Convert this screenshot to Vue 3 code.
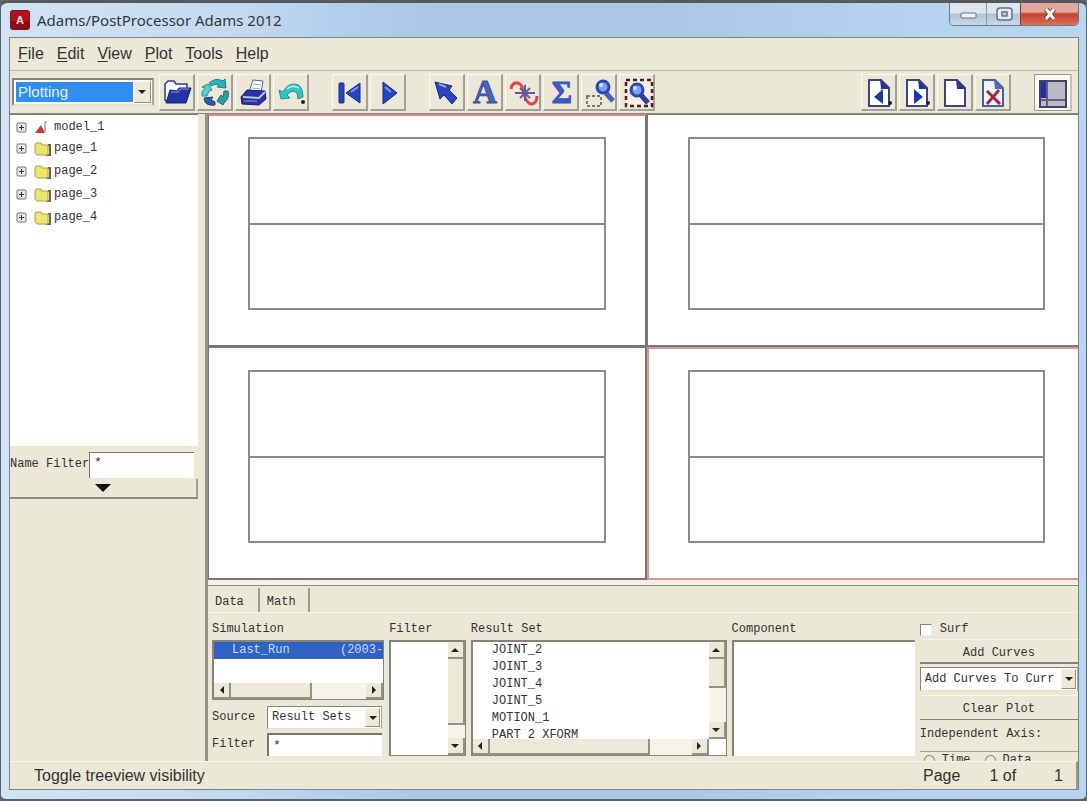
<script setup>
import { ref } from 'vue'

const menus = ['File', 'Edit', 'View', 'Plot', 'Tools', 'Help']
const pages = ['page_1', 'page_2', 'page_3', 'page_4']
const results = ['JOINT_2', 'JOINT_3', 'JOINT_4', 'JOINT_5', 'MOTION_1', 'PART 2 XFORM']
const plots = [1, 2, 3, 4]
const activePlot = ref(4)
const nameFilter = ref('*')
const filter = ref('*')
const surf = ref(false)
</script>

<template>
  <div class="window">
    <header class="titlebar">
      <svg class="logo" viewBox="0 0 20 20" aria-hidden="true">
        <rect x="0.5" y="0.5" width="19" height="19" rx="2" fill="#b3121c" stroke="#7c1319" />
        <rect x="1" y="11" width="18" height="8" fill="#8e0d15" />
        <text x="10" y="14" text-anchor="middle" font-family="Liberation Sans, sans-serif" font-size="11" font-weight="bold" fill="#f5dcdc">A</text>
      </svg>
      <h1>Adams/PostProcessor Adams 2012</h1>
      <div class="controls">
        <button class="min" aria-label="Minimize">
          <svg viewBox="0 0 20 16"><rect x="3" y="7" width="15" height="5" rx="1" fill="#eef3f8" stroke="#66727f" /></svg>
        </button>
        <button class="max" aria-label="Maximize">
          <svg viewBox="0 0 20 16"><rect x="3" y="2" width="15" height="12" rx="3" fill="#e4ebf2" stroke="#66727f" stroke-width="1.5" /><rect x="8" y="6" width="5" height="4" fill="#c5ced8" stroke="#66727f" stroke-width="1.5" /></svg>
        </button>
        <button class="close" aria-label="Close">
          <svg viewBox="0 0 20 16"><path d="M6 3 L14 13 M14 3 L6 13" stroke="#7b3a35" stroke-width="5" /><path d="M6 3 L14 13 M14 3 L6 13" stroke="#fff" stroke-width="3" /></svg>
        </button>
      </div>
    </header>

    <div class="client">
      <nav class="menubar">
        <a v-for="m in menus" :key="m" href="#"><u>{{ m[0] }}</u>{{ m.slice(1) }}</a>
      </nav>

      <div class="toolbar">
        <div class="combo mode">
          <select aria-label="Mode"><option>Plotting</option></select>
          <span class="drop"></span>
        </div>
        <div class="group">
          <button class="tool" aria-label="Open">
            <svg viewBox="0 0 36 36"><path d="M6 10 L9 7 L15 7 L17 10 L28 10 L28 17 L12 18 L9 28 L6 26 Z" fill="#f2f4fb" stroke="#333a72" stroke-width="1.5" /><path d="M7 29 L11 16 L18 17 L20 14 L32 14 L27 29 Z" fill="#2433a9" stroke="#16206f" /><path d="M12 18 L19 18 L21 15 L30 15" fill="none" stroke="#7f92e4" /></svg>
          </button>
          <button class="tool" aria-label="Reload">
            <svg viewBox="0 0 36 36"><path d="M12 9 Q19 3 26 7 L28 5 L29 14 L20 13 L22 11 Q18 9 14 12 Z" fill="#27b6ba" stroke="#257a8a" /><path d="M11 10 L15 16 L12 17 L10 22 L5 22 Q4 17 8 14 L5 13 Z" fill="#5acfcf" stroke="#2f8f98" /><path d="M7 24 L16 23 L14 26 L18 28 L18 31 Q11 32 8 28 Z" fill="#285e9e" stroke="#1c4778" /><path d="M27 17 L31 17 Q33 24 27 29 L26 31 L20 27 L24 21 L26 23 Z" fill="#2a9dab" stroke="#24667c" /></svg>
          </button>
          <button class="tool" aria-label="Print">
            <svg viewBox="0 0 36 36"><path d="M14 18 L18 6 L28 7 L26 19 Z" fill="#fff" stroke="#59627a" /><path d="M18 10 L26 11 M17 14 L25 15" stroke="#9aa5be" /><path d="M6 23 L12 16 L30 17 L31 25 L24 31 L7 30 Z" fill="#2733a2" stroke="#171f68" /><path d="M8 23 L24 24 L30 18" fill="none" stroke="#b9c4f3" stroke-width="2" /><path d="M9 27 H22" stroke="#8d9ce3" /></svg>
          </button>
          <button class="tool" aria-label="Undo">
            <svg viewBox="0 0 36 36"><path d="M6 16 L8 25 L17 24 L14 21 Q19 15 24 19 L25 25 L30 23 Q30 10 21 10 Q14 10 10 18 Z" fill="#38bfc4" stroke="#25939d" /><path d="M14 15 Q19 10 26 14" fill="none" stroke="#a1e8e7" stroke-width="2" /><circle cx="30" cy="28" r="2" fill="#222" /></svg>
          </button>
        </div>
        <div class="group">
          <button class="tool" aria-label="First">
            <svg viewBox="0 0 36 36"><rect x="7" y="9" width="5" height="20" rx="1" fill="#2b44bd" stroke="#1a2a7d" /><path d="M28 9 L28 29 L14 19 Z" fill="#2b44bd" stroke="#1a2a7d" /><path d="M26 13 L19 18" stroke="#7c9cf0" stroke-width="2" /></svg>
          </button>
          <button class="tool" aria-label="Play">
            <svg viewBox="0 0 36 36"><path d="M13 8 L13 30 L27 19 Z" fill="#2643c5" stroke="#17267c" /><path d="M15 13 L21 18" stroke="#7c9cf0" stroke-width="2" /></svg>
          </button>
        </div>
        <div class="group">
          <button class="tool" aria-label="Select">
            <svg viewBox="0 0 36 36"><path d="M6 8 L23 12 L20 16 L28 24 L23 30 L15 21 L11 25 Z" fill="#2b44c0" stroke="#1b2878" /><path d="M10 10 L17 13" stroke="#87a4f0" stroke-width="2" /></svg>
          </button>
          <button class="tool" aria-label="Text">
            <svg viewBox="0 0 36 36"><text x="18" y="29" text-anchor="middle" font-family="Liberation Serif, serif" font-size="33" font-weight="bold" fill="#4664c4" stroke="#3a4f9f">A</text></svg>
          </button>
          <button class="tool" aria-label="Curve">
            <svg viewBox="0 0 36 36"><path d="M6 15 Q7 8 13 9 Q17 10 19 19 Q21 30 27 30 Q32 29 32 22" fill="none" stroke="#e0474b" stroke-width="3" /><path d="M10 19 H30 M20 11 V27 M15 14 L25 24 M25 14 L15 24" stroke="#6a5b98" stroke-width="2" /></svg>
          </button>
          <button class="tool" aria-label="Statistics">
            <svg viewBox="0 0 36 36"><text x="19" y="29" text-anchor="middle" font-family="Liberation Serif, serif" font-size="31" font-weight="bold" fill="#3c58cb" stroke="#3f57b8">Σ</text></svg>
          </button>
          <button class="tool" aria-label="Zoom area">
            <svg viewBox="0 0 36 36"><rect x="6" y="22" width="14" height="10" fill="none" stroke="#555" stroke-dasharray="3 2" stroke-width="1.5" /><path d="M25 19 L32 27" stroke="#4a60bb" stroke-width="5" /><circle cx="22" cy="13" r="6" fill="#7fa0ec" stroke="#2c44b4" stroke-width="3" /><circle cx="20" cy="11" r="2" fill="#d4e2fb" /></svg>
          </button>
          <button class="tool" aria-label="Zoom fit">
            <svg viewBox="0 0 36 36"><rect x="7" y="6" width="26" height="26" fill="#f7efe3" stroke="#5e1622" stroke-dasharray="4 3" stroke-width="2.5" /><path d="M22 21 L29 29" stroke="#2a3f9f" stroke-width="5" /><circle cx="18" cy="16" r="6" fill="#7fa0ec" stroke="#2c44b4" stroke-width="3" /><circle cx="16" cy="14" r="2" fill="#d4e2fb" /></svg>
          </button>
        </div>
        <div class="group end">
          <button class="tool" aria-label="Previous page">
            <svg viewBox="0 0 36 36"><path d="M8 6 H20 L28 14 V32 H8 Z" fill="#fff" stroke="#3c4480" stroke-width="2" /><path d="M19 5 L29 15 H20 Z" fill="#27359a" /><path d="M22 15 V30 L13 23 Z" fill="#1c38a5" /><circle cx="29" cy="29" r="2" fill="#222" /></svg>
          </button>
          <button class="tool" aria-label="Next page">
            <svg viewBox="0 0 36 36"><path d="M8 6 H20 L28 14 V32 H8 Z" fill="#fff" stroke="#3c4480" stroke-width="2" /><path d="M19 5 L29 15 H20 Z" fill="#27359a" /><path d="M15 15 V30 L24 23 Z" fill="#1c38a5" /><circle cx="29" cy="29" r="2" fill="#222" /></svg>
          </button>
          <button class="tool" aria-label="New page">
            <svg viewBox="0 0 36 36"><path d="M8 6 H20 L28 14 V32 H8 Z" fill="#fff" stroke="#3c4480" stroke-width="2" /><path d="M19 5 L29 15 H20 Z" fill="#27359a" /></svg>
          </button>
          <button class="tool" aria-label="Delete page">
            <svg viewBox="0 0 36 36"><path d="M8 6 H20 L28 14 V32 H8 Z" fill="#eef4ff" stroke="#4c5c96" stroke-width="2" /><path d="M19 5 L29 15 H20 Z" fill="#5566b5" /><path d="M12 17 L25 30 M24 16 L12 30" stroke="#a12a3a" stroke-width="3" /></svg>
          </button>
        </div>
        <button class="tool pressed" aria-label="Toggle treeview">
          <svg viewBox="0 0 36 36"><rect x="6" y="7" width="26" height="26" fill="#b9bac4" stroke="#3f4468" stroke-width="2" /><rect x="7" y="8" width="5" height="16" fill="#2430a0" /><path d="M13 8 V32 M7 26 H31" stroke="#5d6282" stroke-width="2" /></svg>
        </button>
      </div>

      <main class="work">
        <aside class="side">
          <ul class="tree">
            <li>
              <svg class="plus" viewBox="0 0 11 11"><rect x="1" y="1" width="9" height="9" rx="1" fill="#e8e8e8" stroke="#777" /><path d="M3 5.5 H8 M5.5 3 V8" stroke="#333" /></svg>
              <svg class="node" viewBox="0 0 18 16"><path d="M1 14 L7 6 L11 14 Z" fill="#c4383c" /><path d="M11 13 V3 H13" fill="none" stroke="#777" /></svg>
              <span>model_1</span>
            </li>
            <li v-for="p in pages" :key="p">
              <svg class="plus" viewBox="0 0 11 11"><rect x="1" y="1" width="9" height="9" rx="1" fill="#e8e8e8" stroke="#777" /><path d="M3 5.5 H8 M5.5 3 V8" stroke="#333" /></svg>
              <svg class="node" viewBox="0 0 18 16"><path d="M14 4 H16 V14 H12" fill="none" stroke="#6a6840" stroke-width="2" /><path d="M1 4 L2 2 H7 L8 4 H14 V14 H3 L1 12 Z" fill="#ece66b" stroke="#a6a052" /></svg>
              <span>{{ p }}</span>
            </li>
          </ul>
          <div class="name-filter">
            <label for="nf">Name Filter</label>
            <input id="nf" v-model="nameFilter" type="text" />
          </div>
          <button class="expand" aria-label="Expand"><svg viewBox="0 0 16 8"><path d="M0 0 H16 L8 8 Z" fill="#111" /></svg></button>
        </aside>

        <section class="content">
          <div class="plots">
            <div v-for="n in plots" :key="n" class="view" :class="{ active: n === activePlot, first: n === 1 }" @click="activePlot = n">
              <div class="axes"><i></i></div>
            </div>
          </div>

          <div class="dash">
            <div class="tabs" role="tablist">
              <button role="tab" aria-selected="true">Data</button>
              <button role="tab">Math</button>
            </div>
            <div class="cols">
              <div class="col">
                <h2>Simulation</h2>
                <div class="list sim">
                  <div class="row sel"><span>Last_Run</span><span>(2003-</span></div>
                  <div class="hbar"><button class="sb left" aria-label="Scroll left"></button><b class="thumb"></b><button class="sb right" aria-label="Scroll right"></button></div>
                </div>
                <div class="field">
                  <label for="src">Source</label>
                  <div class="combo"><select id="src"><option>Result Sets</option></select><span class="drop"></span></div>
                </div>
                <div class="field">
                  <label for="flt">Filter</label>
                  <input id="flt" v-model="filter" type="text" />
                </div>
              </div>
              <div class="col">
                <h2>Filter</h2>
                <div class="list tall">
                  <div class="vbar"><button class="sb up" aria-label="Scroll up"></button><b class="thumb"></b><button class="sb down" aria-label="Scroll down"></button></div>
                </div>
              </div>
              <div class="col">
                <h2>Result Set</h2>
                <div class="list tall split">
                  <div class="pane">
                    <ul><li v-for="r in results" :key="r">{{ r }}</li></ul>
                    <div class="hbar"><button class="sb left" aria-label="Scroll left"></button><b class="thumb wide"></b><button class="sb right" aria-label="Scroll right"></button></div>
                  </div>
                  <div class="vbar short"><button class="sb up" aria-label="Scroll up"></button><b class="thumb"></b><button class="sb down" aria-label="Scroll down"></button></div>
                </div>
              </div>
              <div class="col">
                <h2>Component</h2>
                <div class="list tall open"></div>
              </div>
              <div class="col actions">
                <label class="check"><input v-model="surf" type="checkbox" /><span>Surf</span></label>
                <button class="act heavy">Add Curves</button>
                <div class="combo"><select aria-label="Curve target"><option>Add Curves To Curr</option></select><span class="drop"></span></div>
                <button class="act">Clear Plot</button>
                <p>Independent Axis:</p>
                <div class="radios">
                  <label><input type="radio" name="axis" />Time</label>
                  <label><input type="radio" name="axis" />Data</label>
                </div>
              </div>
            </div>
          </div>
        </section>
      </main>

      <footer class="status">
        <span>Toggle treeview visibility</span>
        <span class="pg">Page</span><span class="cur">1 of</span><span>1</span>
      </footer>
    </div>
  </div>
</template>

<style>
body { margin: 0; background: #64686e; }
</style>

<style scoped>
* { box-sizing: border-box; }
button, input, select { font: inherit; color: inherit; margin: 0; padding: 0; border: 0; border-radius: 0; appearance: none; background: none; }
h1, h2, p, ul { margin: 0; padding: 0; font-weight: normal; list-style: none; }
svg { display: block; }

.window {
  display: flex; flex-direction: column; min-height: 100vh; padding: 0 7px 9px 8px;
  border: 1px solid #55636f; border-top: 3px solid #56585d; border-bottom-width: 2px; border-radius: 8px 8px 6px 6px;
  background: linear-gradient(90deg, #d3e3f4 0, #c3d9ef 22%, #b3d1ec 30%, #a9c8e4 40%, #a9c8e4 60%, #b5d4ef 85%, #b8d4ef 100%);
  color: #333;
}
.titlebar { display: flex; align-items: center; height: 34px; padding-left: 1px; }
.logo { width: 20px; height: 20px; }
h1 { flex: 1; margin-left: 7px; font: 15px/24px "Noto Sans", sans-serif; color: #303840; white-space: nowrap; }
.controls { display: flex; align-self: flex-start; height: 23px; border: 1px solid #6c7a88; border-top: 0; border-radius: 0 0 5px 5px; overflow: hidden; }
.controls button { display: grid; place-items: center; background: linear-gradient(#dce6f0 0 45%, #b3c3d3 50%, #c7d8e8); }
.controls svg { width: 20px; height: 16px; }
.min { width: 36px; }
.controls .max { width: 34px; border-left: 1px solid #8794a1; }
.controls .close { width: 58px; background: linear-gradient(#e3a89d 0 40%, #c7432f 50%, #d97058); border-left: 1px solid #7b4038; }

.client { flex: 1; display: flex; flex-direction: column; border: 1px solid #7b868c; background: #ebe8d7; }
.menubar { display: flex; gap: 13px; height: 33px; padding: 4px 8px; border-bottom: 1px solid #bdbcae; font: 16px/24px "Liberation Sans", Arial, sans-serif; }
.menubar a { color: #333; text-decoration: none; }
.menubar u { text-underline-offset: 2px; }

.toolbar { display: flex; align-items: center; gap: 23px; height: 42px; padding: 0 6px 0 2px; font: 15px/20px "Liberation Sans", Arial, sans-serif; }
.group { display: flex; gap: 2px; }
.group.end { margin-left: auto; }
.tool { width: 36px; height: 37px; border: 1px solid #fbfaf2; border-right: 2px solid #a3a095; border-bottom: 2px solid #a3a095; }
.tool svg { width: 36px; height: 36px; margin: -1px; }
.tool.pressed { width: 38px; background: #fafaf5; border: 1px solid #99968a; border-right: 2px solid #c5c2b4; }
.combo { position: relative; border: 1px solid #85837a; border-right-color: #aaa89c; border-bottom-color: #e5e2d2; background: #fff; }
.combo select { display: block; width: 100%; height: 100%; padding-left: 4px; }
.drop { position: absolute; top: 1px; right: 1px; bottom: 1px; width: 15px; background: #ece9d8; border: 1px solid #f8f7ee; border-right-color: #918f84; border-bottom-color: #918f84; pointer-events: none; }
.drop::after { content: ""; position: absolute; left: 3px; top: calc(50% - 2px); border: 4px solid transparent; border-top-color: #222; border-bottom: 0; }
.mode { width: 142px; height: 28px; padding: 2px 19px 2px 2px; margin-right: -18px; border-width: 2px; }
.mode select { background: #2f8ef0; color: #e6f3ff; padding-left: 2px; }
.mode .drop { width: 17px; }

.work { flex: 1; display: flex; border-top: 1px solid #8a887f; font: 12px/17px "Liberation Mono", "Courier New", monospace; }
.side { display: flex; flex-direction: column; width: 188px; }
.tree { flex: 0 0 332px; padding: 2px 0 0 6px; background: #fff; border-top: 1px solid #777; }
.tree li { display: flex; align-items: center; height: 23px; }
.tree li:first-child { height: 20px; }
.plus { width: 11px; height: 11px; }
.node { width: 18px; height: 16px; margin-left: 7px; }
.tree li span { margin-left: 2px; }
.name-filter { display: flex; align-items: center; height: 33px; padding-top: 4px; }
.name-filter label { width: 79px; white-space: nowrap; }
.name-filter input { flex: 1; min-width: 0; height: 26px; margin-right: 4px; padding: 0 4px 6px; background: #fff; border: 1px solid #77756c; border-right: 0; border-bottom: 0; font-size: 13px; }
.expand { display: grid; place-items: center; height: 20px; border-right: 2px solid #a09d90; border-bottom: 2px solid #8e8c80; }
.expand svg { width: 16px; height: 8px; }

.content { flex: 1; min-width: 0; display: flex; flex-direction: column; margin-left: 7px; border-left: 3px solid #96948a; }
.plots { flex: 1; display: grid; grid-template-columns: 439fr 431fr; grid-template-rows: 1fr 1fr; background: #fff; }
.view { display: flex; padding: 22px 33px 35px 40px; border: 1px solid #777; border-width: 1px 0 2px 1px; }
.view:nth-child(odd) { padding: 22px 39px 35px 39px; border-right: 2px solid #777; }
.view.first { border-top: 2px solid #d98b8b; padding-top: 21px; }
.view.active { border-color: #dc9494; border-top-width: 2px; border-left-width: 2px; padding-left: 39px; padding-top: 21px; }
.axes { flex: 1; display: flex; align-items: center; border: 2px solid #8a8a8a; }
.axes i { flex: 1; height: 2px; background: #8a8a8a; }

.dash { flex: none; height: 181px; display: flex; flex-direction: column; overflow: hidden; border-top: 5px solid #f3f1e4; }
.tabs { display: flex; height: 27px; padding-top: 2px; border-top: 1px solid #8f8d80; }
.tabs button { height: 24px; padding: 4px 12px 0 7px; border-right: 2px solid #9b998c; }
.tabs button:first-child { padding-right: 14px; }
.cols { flex: 1; display: grid; grid-template-columns: 173fr 77fr 257fr 184fr 159fr; gap: 5px; padding: 7px 0 0 4px; border-top: 1px solid #f6f4e8; }
.col { min-width: 0; }
h2 { font-size: 12px; line-height: 19px; height: 20px; }
.list { background: #fff; border: 1px solid #85837a; border-width: 2px 1px 1px 2px; overflow: hidden; }
.list.open { border-right: 0; border-bottom: 0; }
.sim { height: 60px; margin-bottom: 4px; display: flex; flex-direction: column; justify-content: space-between; }
.row { display: flex; justify-content: space-between; padding-left: 18px; white-space: nowrap; }
.sel { background: #2f62c4; color: #c5ddfa; }
.hbar, .vbar { display: flex; background: #f6f4e8; }
.hbar { height: 16px; }
.vbar { flex-direction: column; width: 17px; height: 100%; margin-left: auto; }
.sb { flex: none; display: grid; place-items: center; background: #ece9d8; border-right: 2px solid #939184; border-bottom: 2px solid #939184; }
.hbar .sb { width: 17px; }
.vbar .sb { height: 17px; }
.sb::after { content: ""; border: 4px solid transparent; }
.sb.left::after { border-right-color: #222; border-left: 0; }
.sb.right::after { border-left-color: #222; border-right: 0; }
.sb.up::after { border-bottom-color: #222; border-top: 0; }
.sb.down::after { border-top-color: #222; border-bottom: 0; }
.hbar .right { margin-left: auto; }
.vbar .down { margin-top: auto; }
.thumb { background: #ece9d8; border-right: 2px solid #939184; border-bottom: 2px solid #939184; }
.hbar .thumb { width: 48%; }
.hbar .wide { width: 68%; }
.vbar .thumb { height: 58%; }
.tall { height: 116px; }
.split { display: flex; }
.pane { flex: 1; min-width: 0; display: flex; flex-direction: column; }
.pane ul { height: 97px; overflow: hidden; padding-left: 19px; }
.short { height: 97px; }
.short .thumb { height: 29px; }
.field { display: flex; align-items: center; height: 27px; }
.field label { width: 55px; }
.field .combo, .field input { flex: 1; min-width: 0; height: 23px; margin-right: 2px; }
.field input { background: #fff; border: 1px solid #77756c; border-width: 2px 0 0 2px; padding: 0 4px; font-size: 13px; }
.actions { overflow: hidden; display: flex; flex-direction: column; }
.check { display: flex; align-items: center; gap: 8px; height: 19px; }
.check input { width: 12px; height: 12px; background: #fff; border: 1px solid #85837a; border-right-color: #eee; border-bottom-color: #eee; }
.act { flex: none; height: 25px; padding-top: 4px; border-top: 1px solid #f8f6ec; border-bottom: 1px solid #85837a; }
.act.heavy { border-bottom-width: 2px; margin-bottom: 3px; }
.actions .combo { height: 24px; flex: none; margin-bottom: 4px; }
.actions p { flex: none; padding-top: 6px; height: 31px; }
.radios { display: flex; gap: 14px; padding-left: 4px; border-top: 1px solid #a5a395; line-height: 17px; }
.radios label { display: flex; gap: 7px; align-items: center; }
.radios input { width: 11px; height: 11px; border: 1px solid #77756c; border-radius: 50%; }

.status { display: flex; height: 28px; padding: 0 13px 0 24px; border-top: 1px solid #f8f6ec; border-right: 2px solid #99978b; font: 16px/27px "Liberation Sans", Arial, sans-serif; white-space: pre; }
.pg { margin-left: auto; }
.cur { margin: 0 38px 0 29px; }
</style>
